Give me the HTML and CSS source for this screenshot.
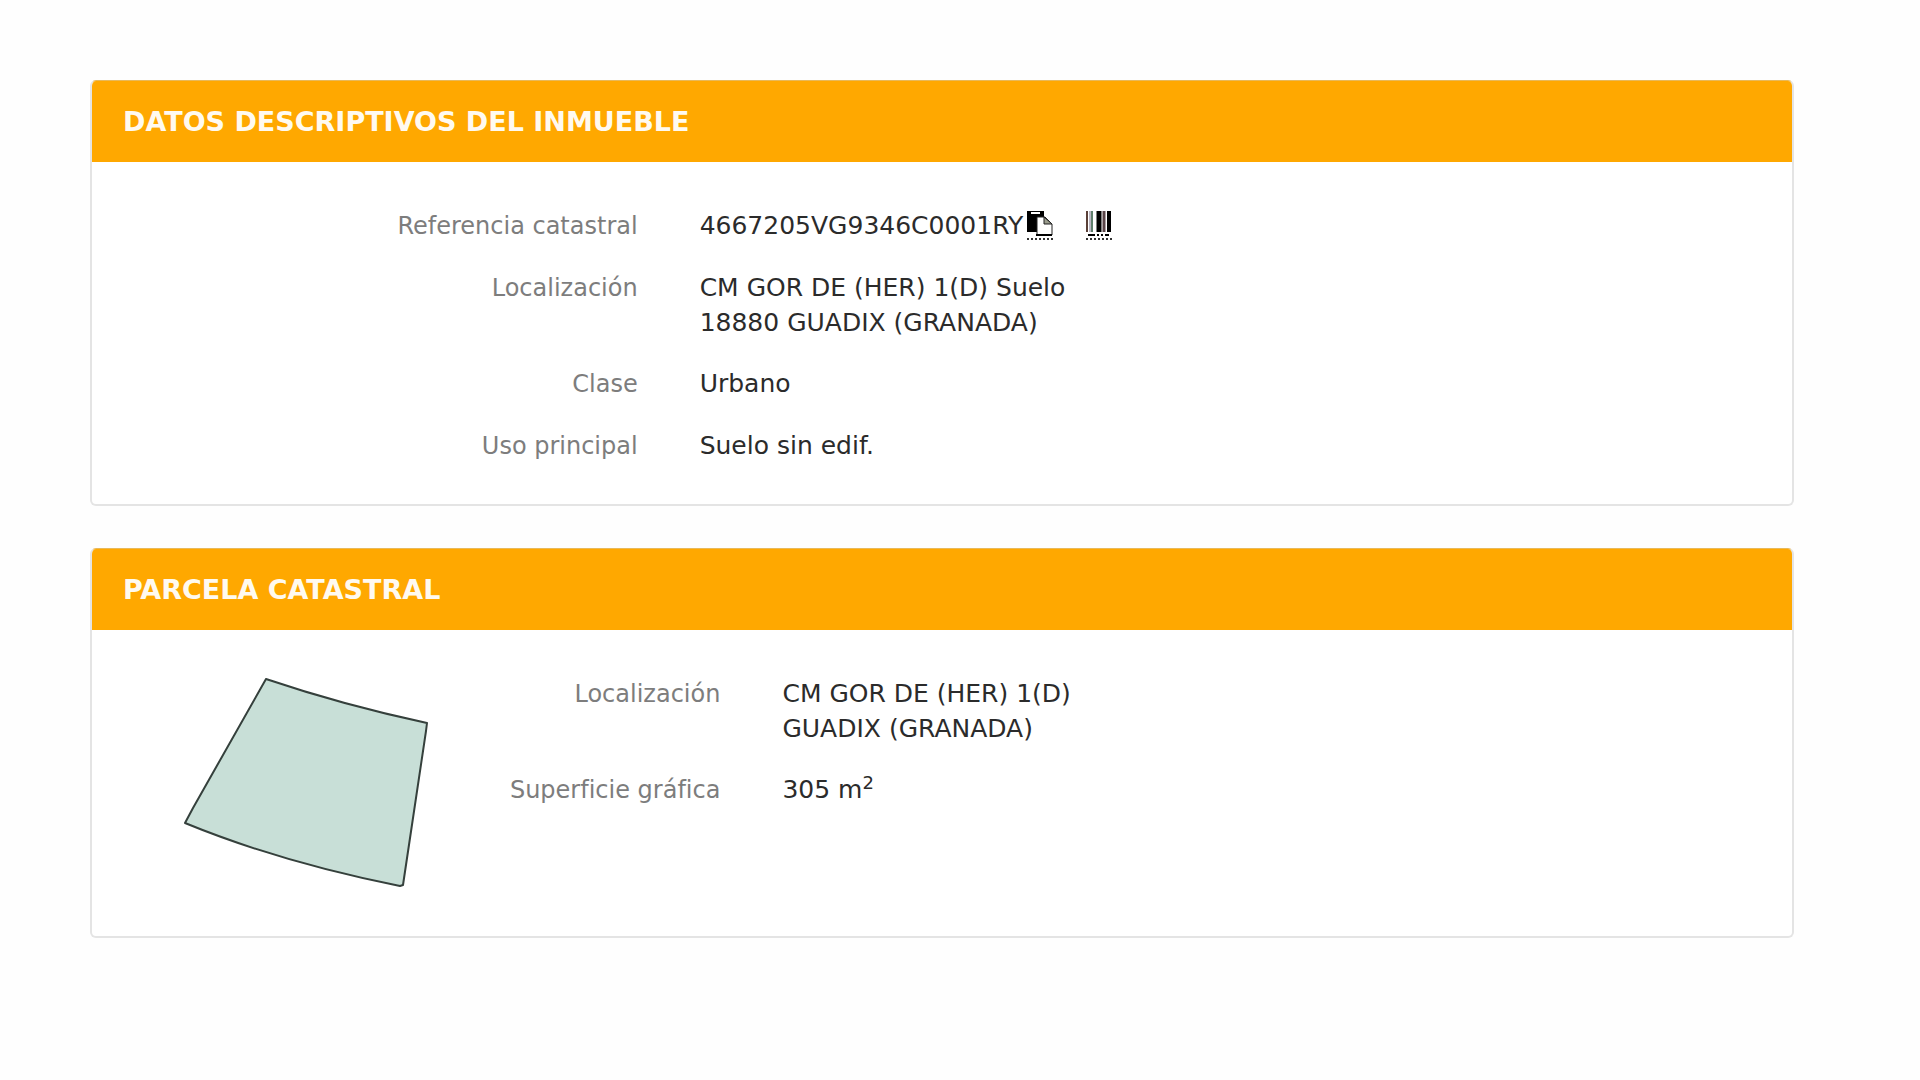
FILE: index.html
```html
<!DOCTYPE html>
<html lang="es">
<head>
<meta charset="utf-8">
<meta name="viewport" content="width=device-width, initial-scale=1">
<title>Datos del inmueble</title>
<link rel="stylesheet" href="styles.css">
</head>
<body>
<main class="page">
  <section class="card">
    <h2 class="card-title">DATOS DESCRIPTIVOS DEL INMUEBLE</h2>
    <div class="card-body">
      <dl class="data">
        <dt>Referencia catastral</dt>
        <dd class="reference">
          <span>4667205VG9346C0001RY</span>
          <button class="icon-button" type="button" aria-label="Copiar referencia">
            <svg viewBox="0 0 26 25" width="26" height="25" aria-hidden="true">
              <path d="M0 0H17V21H0Z" fill="#000"/>
              <path d="M4 2H13" stroke="#fff" stroke-width="2"/>
              <path d="M10 6H18L25 13V24H10Z" fill="#fff" stroke="#222" stroke-width="1"/>
              <path d="M17 6V13H25Z" fill="#9a9c8c" stroke="#222" stroke-width="1"/>
              <path d="M9 24H25" stroke="#000" stroke-width="2"/>
            </svg>
          </button>
          <button class="icon-button" type="button" aria-label="Código de barras">
            <svg viewBox="0 0 26 25" width="26" height="25" aria-hidden="true">
              <path d="M1 0V21" stroke="#5a4038" stroke-width="2"/>
              <path d="M4 0V21" stroke="#776f88" stroke-width="1"/>
              <path d="M6 0V21" stroke="#5f7f6c" stroke-width="2"/>
              <path d="M13 0V21" stroke="#000" stroke-width="5"/>
              <path d="M18 0V21" stroke="#5a4548" stroke-width="3"/>
              <path d="M23 0V21" stroke="#000" stroke-width="4"/>
              <path d="M2 24H9M11 24H13M15 24H17M19 24H23" stroke="#000" stroke-width="2"/>
            </svg>
          </button>
        </dd>
        <dt>Localización</dt>
        <dd>CM GOR DE (HER) 1(D) Suelo<br>18880 GUADIX (GRANADA)</dd>
        <dt>Clase</dt>
        <dd>Urbano</dd>
        <dt>Uso principal</dt>
        <dd>Suelo sin edif.</dd>
      </dl>
    </div>
  </section>

  <section class="card">
    <h2 class="card-title">PARCELA CATASTRAL</h2>
    <div class="card-body parcel">
      <figure class="parcel-map">
        <svg viewBox="0 0 248 212" width="248" height="212" role="img" aria-label="Croquis de la parcela">
          <path d="M83 1Q160 27 244 45L243 53L220 207L217 208Q97 184 2 145L10 130Z" fill="#c8dfd7" stroke="#35403c" stroke-width="2" stroke-linejoin="round"/>
        </svg>
      </figure>
      <dl class="data data-parcel">
        <dt>Localización</dt>
        <dd>CM GOR DE (HER) 1(D)<br>GUADIX (GRANADA)</dd>
        <dt>Superficie gráfica</dt>
        <dd>305 m<sup>2</sup></dd>
      </dl>
    </div>
  </section>
</main>
</body>
</html>
```
FILE: styles.css
```css
* {
  box-sizing: border-box;
}

body {
  margin: 0;
  background: #fefefe;
  color: #2b2b2b;
  font-family: Verdana, "DejaVu Sans", sans-serif;
  font-size: 24px;
  line-height: 35px;
}

.page {
  display: flex;
  flex-direction: column;
  gap: 42px;
  padding: 80px 126px 80px 90px;
}

.card {
  overflow: hidden;
  border: 2px solid #e4e4e4;
  border-top-color: #e8b95a;
  border-top-width: 1px;
  border-radius: 6px;
  background: #fff;
}

.card-title {
  margin: 0;
  padding: 23px 31px;
  background: #ffa800;
  color: #fffaf0;
  font-size: 27px;
  font-weight: 700;
  line-height: 35px;
}

.card-body {
  padding: 46px 30px 40px;
}

.data {
  display: grid;
  grid-template-columns: 1fr 2fr;
  align-items: baseline;
  row-gap: 26px;
  margin: 0;
}

.data dt {
  padding-right: 31px;
  color: #7d7d7d;
  text-align: right;
}

.data dd {
  margin: 0;
  padding-left: 31px;
  font-size: 25px;
}

.reference {
  display: flex;
  align-items: center;
}

.icon-button {
  display: flex;
  height: 29px;
  margin-left: 4px;
  padding: 0;
  border: 0;
  border-bottom: 2px dotted #333;
  background: none;
  cursor: pointer;
}

.icon-button + .icon-button {
  margin-left: 33px;
}

.parcel {
  display: flex;
}

.parcel-map {
  display: flex;
  flex: 0 0 22%;
  justify-content: flex-end;
  margin: 0;
  padding: 2px 52px 6px 0;
}

.data-parcel {
  flex: 1;
  grid-template-columns: 21% 1fr;
  align-content: start;
}

sup {
  font-size: 18px;
  line-height: 0;
}
```
